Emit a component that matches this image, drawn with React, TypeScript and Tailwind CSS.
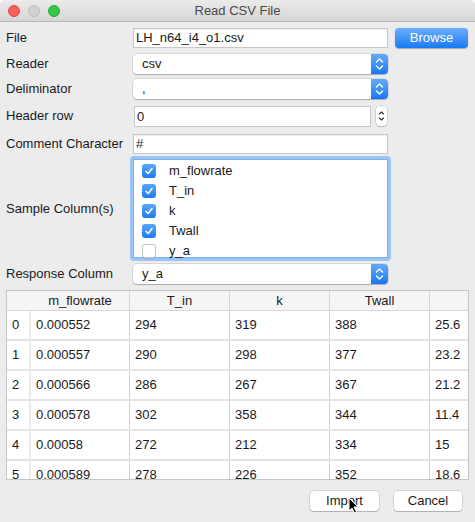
import React from 'react';

const font = { fontFamily: '"Liberation Sans", Arial, sans-serif' };

const Stepper = () => (
  <div className="w-[17px] self-stretch rounded-r-[4px] bg-gradient-to-b from-[#63abfb] to-[#1577f3] flex items-center justify-center">
    <svg width="9" height="14" viewBox="0 0 9 14" fill="none" stroke="white" strokeWidth="1.4" strokeLinecap="round" strokeLinejoin="round">
      <path d="M1.5 5 L4.5 2 L7.5 5" />
      <path d="M1.5 9 L4.5 12 L7.5 9" />
    </svg>
  </div>
);

const Select = ({ value }: { value: string }) => (
  <div className="w-[255px] h-[20px] flex bg-white rounded-[4px] shadow-[0_0_0_0.5px_rgba(0,0,0,0.18),0_1px_1px_rgba(0,0,0,0.2)]">
    <div className="flex-1 pl-[9px] text-[13px] leading-[20px] text-[#1a1a1a]">{value}</div>
    <Stepper />
  </div>
);

const TextInput = ({ value, w = 'w-[255px]' }: { value: string; w?: string }) => (
  <div className={`${w} h-[20px] bg-white border border-[#c8c8c8] shadow-[inset_0_1px_0_rgba(0,0,0,0.06)] pl-[2px] text-[13px] leading-[18px] text-[#1a1a1a]`}>
    {value}
  </div>
);

const Check = ({ checked }: { checked: boolean }) =>
  checked ? (
    <div className="w-[14px] h-[14px] rounded-[3px] bg-gradient-to-b from-[#5aa6fb] to-[#1a7cf4] flex items-center justify-center">
      <svg width="10" height="10" viewBox="0 0 10 10" fill="none" stroke="white" strokeWidth="1.5" strokeLinecap="round" strokeLinejoin="round">
        <path d="M2 5.3 L4.2 7.5 L8 2.5" />
      </svg>
    </div>
  ) : (
    <div className="w-[14px] h-[14px] rounded-[3px] bg-white border border-[#c4c4c4] shadow-[0_0.5px_1px_rgba(0,0,0,0.1)]" />
  );

const columns = [
  { name: 'm_flowrate', w: 'w-[99px]' },
  { name: 'T_in', w: 'w-[100px]' },
  { name: 'k', w: 'w-[100px]' },
  { name: 'Twall', w: 'w-[100px]' },
  { name: '', w: 'flex-1' },
];

const rows = [
  ['0.000552', '294', '319', '388', '25.6'],
  ['0.000557', '290', '298', '377', '23.2'],
  ['0.000566', '286', '267', '367', '21.2'],
  ['0.000578', '302', '358', '344', '11.4'],
  ['0.00058', '272', '212', '334', '15'],
  ['0.000589', '278', '226', '352', '18.6'],
];

const samples = [
  { name: 'm_flowrate', checked: true },
  { name: 'T_in', checked: true },
  { name: 'k', checked: true },
  { name: 'Twall', checked: true },
  { name: 'y_a', checked: false },
];

export default function App() {
  return (
    <div style={font} className="relative w-[475px] h-[522px] bg-[#ececec] text-[13px] text-[#1a1a1a] overflow-hidden rounded-t-[5px]">
      {/* Title bar */}
      <div className="h-[22px] bg-gradient-to-b from-[#ebebeb] to-[#d6d6d6] border-b border-[#b9b9b9] flex items-center relative">
        <div className="flex gap-[8px] pl-[8px]">
          <div className="w-[12px] h-[12px] rounded-full bg-[#fc605c] border border-[#de4a46]" />
          <div className="w-[12px] h-[12px] rounded-full bg-[#d0d0d0] border border-[#bdbdbd]" />
          <div className="w-[12px] h-[12px] rounded-full bg-[#34c84a] border border-[#22a834]" />
        </div>
        <div className="absolute inset-0 flex items-center justify-center text-[13px] text-[#4a4a4a]">Read CSV File</div>
      </div>

      <div className="pl-[6px]">
        {/* File */}
        <div className="flex items-center mt-[6px] h-[20px]">
          <div className="w-[127px]">File</div>
          <TextInput value="LH_n64_i4_o1.csv" />
          <div className="ml-[7px] w-[73px] h-[20px] rounded-[4px] bg-gradient-to-b from-[#67adfb] to-[#127af4] text-white text-center leading-[20px] shadow-[0_0.5px_1px_rgba(0,0,0,0.3)]">
            Browse
          </div>
        </div>

        {/* Reader */}
        <div className="flex items-center mt-[6px] h-[20px]">
          <div className="w-[127px]">Reader</div>
          <Select value="csv" />
        </div>

        {/* Deliminator */}
        <div className="flex items-center mt-[5px] h-[20px]">
          <div className="w-[127px]">Deliminator</div>
          <Select value="," />
        </div>

        {/* Header row */}
        <div className="flex items-center mt-[6px] h-[22px]">
          <div className="w-[128px]">Header row</div>
          <div className="w-[237px] h-[21px] bg-white border border-[#c8c8c8] pl-[2px] leading-[19px]">0</div>
          <div className="ml-[5px] w-[11px] h-[20px] rounded-[4px] bg-white shadow-[0_0_0_0.5px_rgba(0,0,0,0.2),0_1px_1px_rgba(0,0,0,0.15)] flex items-center justify-center">
            <svg width="7" height="14" viewBox="0 0 7 14" fill="none" stroke="#333" strokeWidth="1.1" strokeLinecap="round" strokeLinejoin="round">
              <path d="M1.5 5 L3.5 3 L5.5 5" />
              <path d="M1.5 9 L3.5 11 L5.5 9" />
            </svg>
          </div>
        </div>

        {/* Comment Character */}
        <div className="flex items-center mt-[7px] h-[20px]">
          <div className="w-[127px]">Comment Character</div>
          <TextInput value="#" />
        </div>

        {/* Sample columns */}
        <div className="flex items-center mt-[2px]">
          <div className="w-[124px]">Sample Column(s)</div>
          <div className="w-[261px] h-[105px] rounded-[4px] bg-[#9cc4f4] p-[3px]">
            <div className="h-full bg-white border border-[#7fb0ee] pt-[1px]">
              {samples.map(s => (
                <div key={s.name} className="h-[20px] flex items-center pl-[8px]">
                  <Check checked={s.checked} />
                  <span className="ml-[13px]">{s.name}</span>
                </div>
              ))}
            </div>
          </div>
        </div>

        {/* Response column */}
        <div className="flex items-center mt-[3px] h-[20px]">
          <div className="w-[127px]">Response Column</div>
          <Select value="y_a" />
        </div>
      </div>

      {/* Table */}
      <div className="mx-[6px] mt-[6px] h-[190px] border border-[#c6c6c6] bg-white overflow-hidden">
        <div className="flex h-[20px] bg-[#f5f5f5] border-b border-[#d8d8d8]">
          <div className="w-[24px]" />
          {columns.map((c, i) => (
            <div key={i} className={`${c.w} text-center leading-[20px] ${i < 4 ? 'border-r border-[#d4d4d4]' : ''}`}>
              {c.name}
            </div>
          ))}
        </div>
        {rows.map((r, ri) => (
          <div key={ri} className="flex h-[30px] border-b-2 border-[#e4e4e4]">
            <div className="w-[24px] pl-[5px] leading-[28px] bg-white border-r-2 border-[#ececec]">{ri}</div>
            {r.map((v, ci) => (
              <div key={ci} className={`${columns[ci].w} pl-[5px] leading-[28px] ${ci < 4 ? 'border-r border-[#d4d4d4]' : ''}`}>
                {v}
              </div>
            ))}
          </div>
        ))}
      </div>

      {/* Buttons */}
      <div className="flex justify-end gap-[15px] pr-[13px] mt-[11px]">
        <div className="w-[69px] h-[20px] rounded-[4px] bg-white text-center leading-[20px] shadow-[0_0_0_0.5px_rgba(0,0,0,0.2),0_1px_1px_rgba(0,0,0,0.18)]">Import</div>
        <div className="w-[68px] h-[20px] rounded-[4px] bg-white text-center leading-[20px] shadow-[0_0_0_0.5px_rgba(0,0,0,0.2),0_1px_1px_rgba(0,0,0,0.18)]">Cancel</div>
      </div>

      {/* Mouse cursor */}
      <svg className="absolute left-[348px] top-[497px]" width="11" height="17" viewBox="0 0 11 17">
        <path d="M1 1 L1 14 L4 11 L6.5 16 L8.5 15 L6 10 L10 10 Z" fill="black" stroke="white" strokeWidth="1" strokeLinejoin="round" />
      </svg>
    </div>
  );
}
